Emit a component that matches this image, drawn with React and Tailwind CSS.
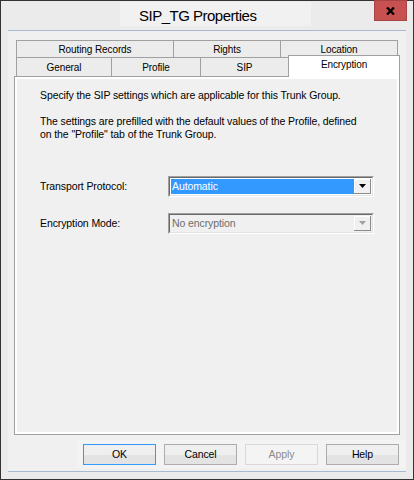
const font = "font-['Liberation_Sans',Arial,sans-serif]";

function Tab({ label, w, last, active }) {
  if (active) {
    return (
      <div
        className={`${w} relative z-10 -mt-[2px] h-[22px] border-t border-l border-r border-[#a0a0a0] bg-white flex justify-center pt-[2px] text-[10px] leading-[13px] text-black`}
      >
        {label}
      </div>
    );
  }
  return (
    <div
      className={`${w} h-full border-t border-l ${last ? "border-r" : ""} border-[#a0a0a0] bg-[#ececec] flex items-center justify-center text-[10px] leading-[13px] text-black`}
    >
      {label}
    </div>
  );
}

function Combo({ value, disabled }) {
  return (
    <div className="w-[206px] h-[21px] border-t border-l border-[#a0a0a0] border-b-white border-r-white border-b border-r">
      <div className="h-full border-t border-l border-[#696969] border-b border-r border-b-[#e3e3e3] border-r-[#e3e3e3]">
        <div className={`h-full flex p-[1px] ${disabled ? "bg-[#f0f0f0]" : "bg-white"}`}>
          <div
            className={`flex-1 flex items-center px-[1px] leading-[13px] ${
              disabled ? "text-[#6d6d6d]" : "bg-[#3399ff] text-white"
            }`}
          >
            {value}
          </div>
          <div className="w-[17px] bg-[#f0f0f0] border-r border-b border-[#8a8a8a] shadow-[inset_1px_1px_0_#fff] flex items-center justify-center">
            <svg width="7" height="4" viewBox="0 0 7 4">
              <polygon points="0,0 7,0 3.5,4" fill={disabled ? "#a0a0a0" : "#000"} />
            </svg>
          </div>
        </div>
      </div>
    </div>
  );
}

function Button({ label, primary, disabled }) {
  const base = "w-[73px] h-[21px] border flex items-center justify-center leading-[13px]";
  if (disabled) {
    return <div className={`${base} border-[#d9d9d9] bg-[#f4f4f4] text-[#8c8c8c]`}>{label}</div>;
  }
  return (
    <div
      className={`${base} ${
        primary ? "border-[#3399ff]" : "border-[#acacac]"
      } bg-[linear-gradient(#efefef_55%,#e3e3e3_55%)] text-black`}
    >
      {label}
    </div>
  );
}

export default function App() {
  return (
    <div className={`${font} relative w-[414px] h-[480px] border border-[#333333] bg-[#ebebeb] flex flex-col`}>
      {/* Title bar */}
      <div className="h-[29px] flex">
        <div className="ml-[119px] mt-[1px] w-[191px] h-[24px] bg-[#f1f1f1] pt-[2px] pl-[19px] text-[15px] leading-[23px] tracking-[-0.5px] text-black">
          SIP_TG Properties
        </div>
      </div>
      <div className="absolute top-[-1px] right-[6px] w-[33px] h-[21px] bg-[#c75050] border border-[#a84444] flex items-center justify-center">
        <svg width="9" height="8" viewBox="0 0 9 8">
          <path d="M1 0.5 L8 7.5 M8 0.5 L1 7.5" stroke="#000" strokeWidth="2.3" />
        </svg>
      </div>

      {/* Client area */}
      <div className="flex-1 mx-[7px] mb-[7px] bg-[#f0f0f0] border-t border-b border-[#a9b9cf] px-[6px] pt-[9px] flex flex-col text-[10.5px] tracking-[-0.1px]">
        {/* Tabs */}
        <div className="pl-[2px]">
          <div className="flex h-[17px]">
            <Tab label="Routing Records" w="w-[157px]" />
            <Tab label="Rights" w="w-[107px]" />
            <Tab label="Location" w="w-[118px]" last />
          </div>
          <div className="flex h-[19px] items-start">
            <Tab label="General" w="w-[95px]" />
            <Tab label="Profile" w="w-[89px]" />
            <Tab label="SIP" w="w-[88px]" />
            <Tab label="Encryption" w="w-[112px]" active />
          </div>
        </div>

        {/* Panel */}
        <div className="w-[386px] h-[359px] border border-[#a0a0a0] shadow-[inset_2px_2px_0_#fff,inset_-2px_-2px_0_#fff] pt-[12px] pl-[25px] text-black">
          <p className="leading-[13px]">Specify the SIP settings which are applicable for this Trunk Group.</p>
          <p className="mt-[13px] leading-[13px]">
            The settings are prefilled with the default values of the Profile, defined
            <br />
            on the "Profile" tab of the Trunk Group.
          </p>

          <div className="mt-[35px] flex items-center">
            <div className="w-[128px] leading-[13px]">Transport Protocol:</div>
            <Combo value="Automatic" />
          </div>
          <div className="mt-[16px] flex items-center">
            <div className="w-[128px] leading-[13px]">Encryption Mode:</div>
            <Combo value="No encryption" disabled />
          </div>
        </div>

        {/* Buttons */}
        <div className="self-end -mr-[6px] mt-[5px] bg-[#f3f3f3] pl-[6px] pr-[7px] pt-[4px] pb-[3px] flex gap-[8px]">
          <Button label="OK" primary />
          <Button label="Cancel" />
          <Button label="Apply" disabled />
          <Button label="Help" />
        </div>
      </div>
    </div>
  );
}
